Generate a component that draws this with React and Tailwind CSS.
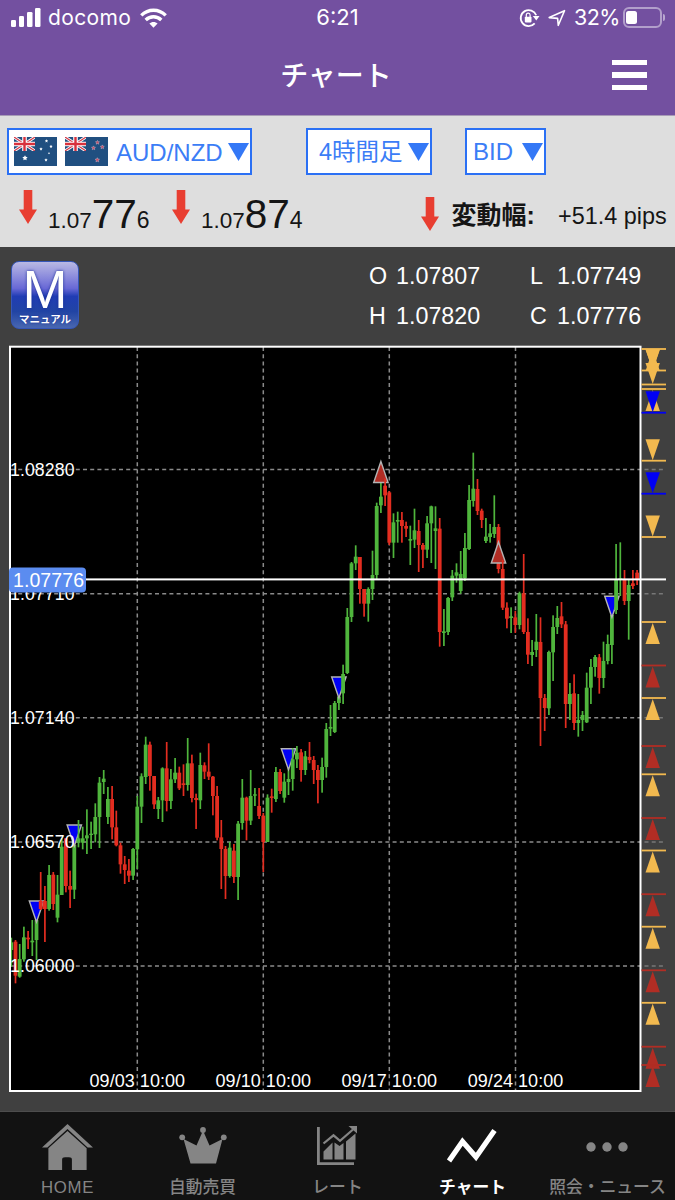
import { Fragment } from 'react';

const GREEN = '#4fb53c';
const RED = '#e32d20';
const GOLD = '#f2b94f';
const BRICK = '#b12d24';
const BLUE = '#0000f5';

// Four-hour candles: [direction, high, low, body top, body bottom].
// Values are in thirds of a pixel below the `top` of each block.
const CANDLE_BLOCKS = [
  {
    top: 690,
    rows: [
      ['u', 743, 830, 757, 780], ['d', 750, 880, 755, 857], ['u', 762, 863, 807, 860],
      ['u', 710, 815, 742, 808], ['d', 723, 777, 743, 748], ['u', 690, 798, 752, 757],
      ['u', 690, 810, 690, 750], ['d', 546, 660, 633, 657], ['d', 588, 756, 633, 657],
      ['u', 525, 662, 555, 657], ['d', 546, 660, 554, 642], ['u', 555, 697, 614, 683],
      ['u', 443, 615, 470, 615], ['d', 445, 607, 445, 588], ['d', 542, 654, 588, 599],
      ['u', 455, 627, 465, 599], ['u', 390, 472, 445, 458], ['u', 410, 478, 445, 458],
      ['u', 358, 492, 436, 445], ['u', 395, 477, 431, 435], ['u', 340, 457, 381, 433],
      ['u', 261, 474, 278, 381], ['u', 240, 312, 266, 276], ['u', 291, 402, 327, 381],
      ['d', 288, 448, 327, 412], ['d', 362, 469, 412, 466], ['d', 458, 551, 466, 523],
      ['d', 498, 582, 523, 540], ['d', 507, 576, 542, 557], ['u', 474, 570, 477, 557],
      ['u', 318, 537, 350, 478], ['u', 250, 399, 259, 350], ['u', 140, 282, 164, 261],
      ['d', 155, 302, 164, 258], ['d', 258, 357, 258, 343], ['u', 321, 387, 331, 357],
      ['u', 232, 396, 235, 331], ['d', 156, 364, 235, 333], ['u', 237, 357, 268, 333],
      ['u', 204, 279, 248, 268], ['d', 230, 300, 248, 295], ['d', 223, 318, 280, 285],
      ['u', 144, 302, 220, 285], ['d', 194, 337, 220, 324], ['d', 311, 417, 324, 330],
      ['u', 188, 357, 225, 331], ['d', 217, 267, 226, 245], ['d', 160, 270, 245, 260],
      ['d', 258, 376, 260, 318], ['d', 288, 451, 318, 443],
    ],
  },
  {
    top: 650,
    rows: [
      ['d', 510, 717, 562, 597], ['d', 588, 747, 597, 678], ['u', 576, 683, 593, 678],
      ['d', 582, 699, 602, 681], ['u', 513, 750, 521, 681], ['u', 387, 539, 443, 519],
      ['d', 440, 571, 443, 512], ['u', 360, 525, 438, 512], ['u', 414, 468, 433, 437],
      ['d', 414, 507, 468, 498], ['d', 489, 666, 497, 576], ['u', 433, 576, 443, 576],
      ['d', 416, 488, 439, 444], ['u', 351, 456, 366, 447], ['d', 357, 432, 366, 423],
      ['u', 370, 458, 395, 443], ['u', 348, 435, 387, 396], ['u', 295, 422, 328, 387],
      ['u', 288, 354, 308, 328], ['d', 297, 395, 307, 360], ['u', 303, 375, 319, 360],
      ['d', 276, 340, 321, 330], ['d', 318, 402, 330, 360], ['d', 345, 460, 360, 390],
      ['u', 323, 428, 351, 390], ['u', 219, 383, 237, 351], ['u', 165, 258, 231, 236],
      ['u', 153, 249, 159, 246], ['u', 140, 180, 140, 159], ['u', 44, 162, 72, 130],
    ],
  },
  {
    top: 440,
    rows: [
      ['u', 504, 702, 531, 699], ['u', 366, 546, 370, 531], ['u', 316, 390, 350, 370],
      ['d', 351, 491, 351, 447], ['d', 447, 530, 447, 491], ['u', 442, 545, 447, 491],
      ['u', 332, 480, 405, 447], ['u', 188, 418, 198, 405], ['u', 125, 219, 170, 196],
      ['d', 115, 198, 137, 166], ['d', 153, 315, 157, 308], ['u', 220, 354, 247, 308],
      ['u', 215, 308, 240, 245], ['d', 216, 308, 240, 258], ['d', 245, 291, 258, 266],
      ['u', 257, 375, 297, 302], ['u', 206, 324, 271, 299], ['d', 240, 396, 273, 315],
      ['d', 309, 384, 315, 329], ['u', 228, 354, 250, 329], ['u', 197, 369, 199, 250],
      ['u', 199, 387, 265, 273], ['d', 234, 620, 266, 576], ['u', 507, 618, 574, 579],
      ['u', 471, 585, 474, 576], ['u', 390, 483, 407, 472], ['u', 370, 428, 397, 407],
      ['u', 333, 461, 402, 453], ['u', 279, 423, 324, 415], ['u', 135, 330, 180, 327],
      ['u', 38, 200, 146, 183], ['d', 117, 225, 147, 213], ['d', 206, 264, 212, 240],
      ['u', 234, 309, 290, 303], ['u', 252, 308, 280, 291], ['u', 166, 294, 261, 282],
      ['d', 252, 400, 261, 387],
    ],
  },
  {
    top: 530,
    rows: [
      ['d', 90, 240, 117, 233], ['d', 217, 295, 233, 266], ['u', 232, 309, 259, 264],
      ['d', 243, 309, 262, 285], ['u', 185, 298, 190, 285], ['d', 72, 312, 190, 306],
      ['d', 265, 402, 306, 374], ['u', 330, 408, 366, 375], ['u', 252, 381, 335, 360],
      ['d', 262, 648, 336, 504], ['d', 492, 603, 504, 534], ['u', 362, 555, 366, 535],
      ['u', 256, 453, 291, 367], ['u', 228, 312, 264, 291], ['d', 216, 294, 259, 283],
      ['d', 273, 594, 283, 522], ['u', 459, 570, 492, 522], ['d', 433, 600, 490, 579],
      ['u', 492, 620, 570, 579], ['u', 543, 603, 555, 570], ['u', 428, 579, 473, 577],
      ['u', 387, 522, 411, 473], ['u', 375, 440, 381, 411], ['d', 372, 491, 382, 444],
      ['u', 335, 474, 393, 444], ['u', 314, 403, 342, 393], ['u', 255, 402, 255, 345],
      ['u', 42, 252, 150, 240], ['u', 37, 198, 145, 150], ['d', 120, 225, 150, 213],
      ['u', 150, 329, 165, 213], ['d', 120, 177, 160, 168], ['d', 120, 165, 128, 150],
    ],
  },
];

const CANDLES = CANDLE_BLOCKS.flatMap(({ top, rows }) =>
  rows.map(([dir, ...ys]) => [dir, ...ys.map((y) => top + y / 3)])
);

// trade markers keyed by candle index
const MARKERS = {
  6: { dir: 'down', y: 901 },
  15: { dir: 'down', y: 825 },
  66: { dir: 'down', y: 748.7 },
  78: { dir: 'down', y: 677 },
  88: { dir: 'up', y: 461.5 },
  116: { dir: 'up', y: 542 },
  143: { dir: 'down', y: 596.3 },
};

const PRICES = [
  ['1.08280', 469.5],
  ['1.07710', 593.7],
  ['1.07140', 717.8],
  ['1.06570', 842],
  ['1.06000', 966],
];

const DATES = [
  ['09/03 10:00', 137.3],
  ['09/10 10:00', 263.3],
  ['09/17 10:00', 389.3],
  ['09/24 10:00', 515.5],
];

// [color, direction, order line y]
const ORDERS = [
  [GOLD, 'up', 349],
  [GOLD, 'down', 370.5],
  [GOLD, 'down', 384.5],
  [GOLD, 'up', 389],
  [BLUE, 'down', 412.7],
  [GOLD, 'down', 460.7],
  [BLUE, 'down', 493.7],
  [GOLD, 'down', 537],
  [GOLD, 'up', 622],
  [BRICK, 'up', 665.5],
  [GOLD, 'up', 698],
  [BRICK, 'up', 746],
  [GOLD, 'up', 774.3],
  [BRICK, 'up', 818],
  [GOLD, 'up', 850.5],
  [BRICK, 'up', 894.2],
  [GOLD, 'up', 926.7],
  [BRICK, 'up', 970.3],
  [GOLD, 'up', 1002.8],
  [BRICK, 'up', 1046.7],
  [BRICK, 'up', 1065],
];

function Triangle({ x, y, dir, ...props }) {
  const points =
    dir === 'up'
      ? `${x},${y} ${x + 7.2},${y + 21} ${x - 7.2},${y + 21}`
      : `${x - 7.2},${y} ${x + 7.2},${y} ${x},${y + 21}`;
  return <polygon points={points} {...props} />;
}

function CandleChart() {
  return (
    <svg
      viewBox="0 345 675 766"
      className="block h-[766px] w-[675px] shrink-0 font-['Liberation_Sans',sans-serif]"
    >
      <rect x="10" y="346.7" width="630.5" height="744.3" fill="#000" />

      <g stroke="#8a8a8a" strokeWidth="1.5" strokeDasharray="4 3.2">
        {DATES.map(([label, x]) => (
          <line key={label} x1={x} x2={x} y1="347" y2="1090" />
        ))}
        {PRICES.map(([label, y]) => (
          <line key={label} x1="11" x2="640" y1={y} y2={y} />
        ))}
      </g>
      <g stroke="#777" strokeWidth="1.5" strokeDasharray="4 3.2">
        {PRICES.map(([label, y]) => (
          <line key={label} x1="644.5" x2="663" y1={y} y2={y} />
        ))}
      </g>

      {CANDLES.map(([dir, high, low, top, bottom], i) => {
        const x = 11.3 + i * 4.2;
        const color = dir === 'u' ? GREEN : RED;
        const marker = MARKERS[i];
        return (
          <Fragment key={i}>
            <rect x={x - 0.85} y={high} width="1.7" height={low - high} fill={color} />
            <rect x={x - 1.9} y={top} width="3.8" height={bottom - top} fill={color} />
            {marker && (
              <Triangle
                x={x}
                y={marker.y}
                dir={marker.dir}
                fill={marker.dir === 'up' ? BRICK : BLUE}
                stroke="#b4b4b4"
                strokeWidth="1.4"
              />
            )}
          </Fragment>
        );
      })}

      <g fill="#fff" fontSize="17.7">
        {PRICES.map(([label, y]) => (
          <text key={label} x="10" y={y + 6.3} textLength="64.5">
            {label}
          </text>
        ))}
      </g>
      <g fill="#fff" fontSize="18" textAnchor="middle">
        {DATES.map(([label, x]) => (
          <text key={label} x={x} y="1087" textLength="95.5">
            {label}
          </text>
        ))}
      </g>

      <rect x="10" y="346.7" width="630.5" height="744.3" fill="none" stroke="#fff" strokeWidth="2" />

      {/* open orders */}
      {ORDERS.map(([color, dir, y]) => (
        <g key={y} fill={color}>
          <rect x="641.5" y={y - 0.9} width="24.5" height="1.8" />
          <Triangle x={652.7} y={dir === 'up' ? y + 1 : y - 21.5} dir={dir} />
        </g>
      ))}
      <Triangle x={652.7} y={349.5} dir="down" fill={GOLD} />

      {/* current price */}
      <rect x="80" y="578.4" width="586" height="2" fill="#fff" />
      <rect x="9" y="567.5" width="77" height="25" rx="4" fill="#5b8cf0" />
      <text x="13" y="587" fill="#fff" fontSize="19.5" textLength="71">
        1.07776
      </text>
    </svg>
  );
}

function StatusBar() {
  return (
    <div className="flex h-[35px] items-center text-white font-['Inter',sans-serif]">
      <div className="flex w-[225px] items-center pl-[11px]">
        <svg viewBox="0 0 30 19" className="h-[19px] w-[30px]" fill="currentColor">
          <rect x="0" y="12" width="5" height="7" rx="1.3" />
          <rect x="8" y="8" width="5" height="11" rx="1.3" />
          <rect x="16" y="4" width="5.5" height="15" rx="1.3" />
          <rect x="24" y="0" width="5.5" height="19" rx="1.3" />
        </svg>
        <span className="ml-[7px] w-[92px] text-[21px] leading-[35px] tracking-[0.35px]">docomo</span>
        <svg viewBox="0 0 27 20" className="h-5 w-[27px]" fill="none" stroke="currentColor" strokeWidth="3.4">
          <path d="M1.3 7.4C8.3 0.6 18.7 0.6 25.7 7.4" />
          <path d="M5.7 12C10.2 7.7 16.8 7.7 21.3 12" />
          <path d="M9.4 15.6C11.5 13.3 15.5 13.3 17.6 15.6L13.5 19.8Z" fill="currentColor" stroke="none" />
        </svg>
      </div>
      <div className="w-[225px] text-center text-[22px] leading-[35px]">6:21</div>
      <div className="flex w-[225px] items-center pl-[69px]">
        <svg viewBox="0 0 21 20" className="h-5 w-[21px]" fill="none" stroke="currentColor" strokeWidth="1.8">
          <path d="M15.7 15.4A8 8 0 1 1 17.2 7.2" />
          <path d="M13.8 8H20.5L17.3 12.6Z" fill="currentColor" stroke="none" />
          <rect x="5.8" y="8.8" width="6.7" height="5.6" rx="0.8" fill="currentColor" stroke="none" />
          <path d="M7.3 9V7.1A1.9 1.9 0 0 1 11.1 7.1V9" strokeWidth="1.2" />
        </svg>
        <svg viewBox="0 0 18 18" className="ml-[8px] h-[18px] w-[18px]" fill="none" stroke="currentColor" strokeWidth="1.6" strokeLinejoin="round">
          <path d="M1.2 8.6L16.5 1.7L10.3 16.3L9.6 9.4Z" />
        </svg>
        <span className="ml-[8px] w-[48.5px] text-[21.5px] leading-[35px] tracking-[-0.6px]">32%</span>
        <div className="flex h-[21px] w-[39px] items-center rounded-[6px] border-2 border-white/45 pl-[1.5px]">
          <div className="h-[13px] w-[11px] rounded-[2.5px] bg-white" />
        </div>
        <div className="ml-[1.5px] h-[7px] w-[2px] rounded-r-full bg-white/50" />
      </div>
    </div>
  );
}

function Header() {
  return (
    <header className="h-[115px] shrink-0 bg-[#7350a0]">
      <StatusBar />
      <div className="flex h-[80px] items-center">
        <div className="w-[100px]" />
        <h1 className="flex-1 pt-[3px] pr-[3px] text-center text-[28px] font-medium text-white">チャート</h1>
        <button type="button" aria-label="menu" className="flex w-[100px] flex-col gap-[7px] pl-[37px]">
          <span className="h-[5.5px] w-[34.5px] bg-white" />
          <span className="h-[5.5px] w-[34.5px] bg-white" />
          <span className="h-[5.5px] w-[34.5px] bg-white" />
        </button>
      </div>
    </header>
  );
}

function UnionJack() {
  return (
    <svg width="21" height="14" viewBox="0 0 21 14">
      <path d="M0 0L21 14M21 0L0 14" stroke="#fff" strokeWidth="3" />
      <path d="M0 0L21 14M21 0L0 14" stroke="#d33a48" strokeWidth="1.2" />
      <path d="M10.5 0V14M0 7H21" stroke="#fff" strokeWidth="4.6" />
      <path d="M10.5 0V14M0 7H21" stroke="#d8303c" strokeWidth="2.4" />
    </svg>
  );
}

function Star({ x, y, r, ...props }) {
  const points = Array.from({ length: 10 }, (_, i) => {
    const radius = i % 2 ? r * 0.5 : r;
    const a = (Math.PI / 5) * i - Math.PI / 2;
    return `${x + radius * Math.cos(a)},${y + radius * Math.sin(a)}`;
  }).join(' ');
  return <polygon points={points} {...props} />;
}

const FLAG_STARS = {
  au: [[32.5, 4, 1.7], [27, 12, 1.7], [37, 9.5, 1.7], [35, 16.3, 1.1], [32, 23, 1.7], [11, 21, 2.8]],
  nz: [[32.5, 5.5, 2.1], [28.5, 11, 2.1], [37.3, 10, 2.1], [32.3, 23, 2.3]],
};

function Flag({ country, className }) {
  const au = country === 'au';
  return (
    <svg viewBox="0 0 43 29" className={`h-[29px] w-[43px] ${className}`}>
      <rect width="43" height="29" fill="#204f80" />
      <UnionJack />
      {FLAG_STARS[country].map(([x, y, r]) => (
        <Star
          key={`${x}-${y}`}
          x={x}
          y={y}
          r={r}
          fill={au ? '#fff' : '#c94a62'}
          stroke={au ? 'none' : '#c9b7c9'}
          strokeWidth="0.5"
        />
      ))}
    </svg>
  );
}

function Select({ children, className }) {
  return (
    <button
      type="button"
      className={`flex h-[47px] items-center border-2 border-[#2b70f4] bg-white pr-px text-2xl whitespace-nowrap text-[#3b7df6] ${className}`}
    >
      {children}
      <svg viewBox="0 0 21 18" className="ml-auto h-[18px] w-[21px]" fill="#3478f6">
        <path d="M0 0H21L10.5 18Z" />
      </svg>
    </button>
  );
}

function DownArrow({ className }) {
  return (
    <svg viewBox="0 0 18 34" className={`h-[34px] w-[18px] ${className}`}>
      <path d="M4.7 0H13.3V19.5H18L9 34L0 19.5H4.7Z" fill="#e83e31" />
    </svg>
  );
}

function Quote({ lead, main, tail, className }) {
  return (
    <div className={`flex items-baseline leading-none text-[#151515] ${className}`}>
      <span className="text-[22.5px]">{lead}</span>
      <span className="text-[40.5px]">{main}</span>
      <span className="text-[23px]">{tail}</span>
    </div>
  );
}

function RatePanel() {
  return (
    <section className="h-[132px] shrink-0 border-t border-[#a79bb6] bg-[#dedede]">
      <div className="flex pt-[12px] pl-[7px]">
        <Select className="w-[245px] pl-[5px]">
          <Flag country="au" />
          <Flag country="nz" className="ml-[8px]" />
          <span className="ml-[8px] pt-[2px]">AUD/NZD</span>
        </Select>
        <Select className="ml-[54px] w-[126px] pl-[11px]">
          <span className="pt-[3px] text-[23.5px]">4時間足</span>
        </Select>
        <Select className="ml-[33px] w-[81px] pl-[6px]">
          <span>BID</span>
        </Select>
      </div>
      <div className="flex items-start pt-[14px] pl-[19px]">
        <DownArrow className="mt-px" />
        <Quote lead="1.07" main="77" tail="6" className="ml-[11px] w-[124px] pt-[5px]" />
        <DownArrow className="mt-px" />
        <Quote lead="1.07" main="87" tail="4" className="ml-[11px] w-[220px] pt-[5px]" />
        <DownArrow className="mt-[8px]" />
        <span className="ml-[12.5px] w-[106.5px] pt-[8px] text-[25px] leading-9 font-bold whitespace-nowrap text-[#151515]">
          変動幅:
        </span>
        <span className="pt-[8.5px] text-[23.4px] leading-9 whitespace-nowrap text-[#151515]">+51.4 pips</span>
      </div>
    </section>
  );
}

const OHLC = [
  ['O', '1.07807'],
  ['L', '1.07749'],
  ['H', '1.07820'],
  ['C', '1.07776'],
];

function ChartInfo() {
  return (
    <div className="flex h-[98px] shrink-0 pt-[14px] pl-[11px]">
      <button
        type="button"
        className="flex h-[68px] w-[68px] flex-col items-center rounded-lg border border-[#3556b8] bg-[linear-gradient(to_bottom,#b9b9e4,#6868d6_40%,#203cb4_52%,#2144a4_75%,#4967b0)] text-white"
      >
        <span className="h-[50px] text-[54px] leading-[54px] [text-shadow:0_0_3px_#152a91]">M</span>
        <span className="text-[10.5px] leading-[14px] font-bold whitespace-nowrap [text-shadow:0_0_2px_#152a91]">
          マニュアル
        </span>
      </button>
      <div className="ml-[290px] grid grid-cols-[161px_120px] content-start text-[23.3px] leading-[39.5px] whitespace-nowrap text-white -mt-[4px]">
        {OHLC.map(([name, value]) => (
          <div key={name} className="flex">
            <span className="w-[27px]">{name}</span>
            <span>{value}</span>
          </div>
        ))}
      </div>
    </div>
  );
}

function HomeIcon() {
  return (
    <svg viewBox="0 0 52 60" className="h-[46px] w-[51px]" preserveAspectRatio="none" fill="currentColor">
      <path d="M26 0L0 30.5H5.5L26 6.5L46.5 30.5H52Z" />
      <path d="M26 9L6.5 31.5V60H20.5V46.5Q20.5 43.5 23.5 43.5H27.5Q30.5 43.5 30.5 46.5V60H45.5V31.5Z" />
    </svg>
  );
}

function CrownIcon() {
  return (
    <svg viewBox="0 0 48 37" className="mb-[4px] h-[37px] w-[48px]" fill="currentColor">
      <path d="M11.5 36.5L4.5 12L17.5 18.5L24 3.5L30.5 18.5L43.5 12L37 36.5Z" />
      <circle cx="24" cy="3" r="2.9" />
      <circle cx="3.2" cy="10.3" r="2.9" />
      <circle cx="44.8" cy="10.3" r="2.9" />
    </svg>
  );
}

function RateIcon() {
  return (
    <svg viewBox="0 0 40 39" className="mr-[2px] mb-[3px] h-[39px] w-[40px]" fill="currentColor">
      <path d="M0 1H2.8V36.3H37V39H0Z" />
      <path d="M6.5 25.5L15.5 16.5V33.5H6.5ZM17.5 16.5L22.5 20L26.5 17V33.5H17.5ZM29 15.5L38.5 7.5V33.5H29Z" />
      <path d="M6.5 17.5L16.5 9.3L23 14.8L36 3.5" fill="none" stroke="currentColor" strokeWidth="2.2" />
      <path d="M31.5 0H40V7.5Z" />
    </svg>
  );
}

function LineIcon() {
  return (
    <svg viewBox="0 0 50 34" className="mr-px mb-[2px] h-[34px] w-[50px]">
      <path d="M2 32L15.5 12.5L29 28L47.5 1.5" fill="none" stroke="currentColor" strokeWidth="5.2" />
    </svg>
  );
}

function DotsIcon() {
  return (
    <svg viewBox="0 0 42 12" className="mr-[2px] h-3 w-[42px]" fill="currentColor">
      <circle cx="5" cy="6" r="4.7" />
      <circle cx="21" cy="6" r="4.7" />
      <circle cx="37" cy="6" r="4.7" />
    </svg>
  );
}

const TABS = [
  { label: 'HOME', Icon: HomeIcon },
  { label: '自動売買', Icon: CrownIcon },
  { label: 'レート', Icon: RateIcon },
  { label: 'チャート', Icon: LineIcon, active: true },
  { label: '照会・ニュース', Icon: DotsIcon },
];

function TabBar() {
  return (
    <nav className="grid h-[89px] shrink-0 grid-cols-5 border-t border-[#4c4c4c] bg-[#121212]">
      {TABS.map(({ label, Icon, active }) => (
        <button
          key={label}
          type="button"
          className={`flex flex-col items-center ${active ? 'font-bold text-white' : 'font-medium text-[#858585]'}`}
        >
          <span className="flex h-[64px] items-center pt-[6px]">
            <Icon />
          </span>
          <span className={`text-[16.8px] leading-6 whitespace-nowrap ${label === 'HOME' ? 'tracking-[0.7px]' : ''}`}>
            {label}
          </span>
        </button>
      ))}
    </nav>
  );
}

export default function App() {
  return (
    <div className="flex h-[1200px] w-[675px] flex-col overflow-hidden bg-[#404040] font-['Liberation_Sans','Noto_Sans_CJK_JP',sans-serif]">
      <Header />
      <RatePanel />
      <ChartInfo />
      <CandleChart />
      <TabBar />
    </div>
  );
}
